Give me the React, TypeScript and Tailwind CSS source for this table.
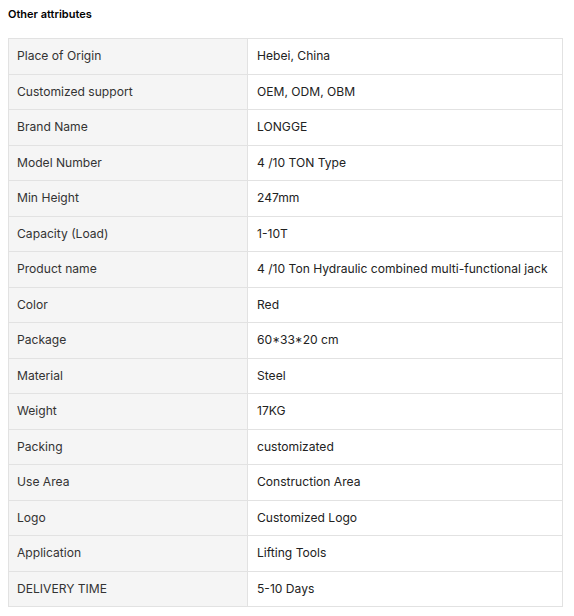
const attributes: [string, string][] = [
  ['Place of Origin', 'Hebei, China'],
  ['Customized support', 'OEM, ODM, OBM'],
  ['Brand Name', 'LONGGE'],
  ['Model Number', '4 /10 TON Type'],
  ['Min Height', '247mm'],
  ['Capacity (Load)', '1-10T'],
  ['Product name', '4 /10 Ton Hydraulic combined multi-functional jack'],
  ['Color', 'Red'],
  ['Package', '60*33*20 cm'],
  ['Material', 'Steel'],
  ['Weight', '17KG'],
  ['Packing', 'customizated'],
  ['Use Area', 'Construction Area'],
  ['Logo', 'Customized Logo'],
  ['Application', 'Lifting Tools'],
  ['DELIVERY TIME', '5-10 Days'],
];

export default function App() {
  return (
    <div className="bg-white w-[574px] h-[616px] font-['Inter',sans-serif] text-[#222]">
      {/* Section title */}
      <h2 className="pl-2 pt-[7px] text-[11px] font-semibold leading-[14px] text-black">
        Other attributes
      </h2>

      {/* Attribute table */}
      <table className="ml-2 mt-[17px] w-[555px] border-collapse text-[12.1px] table-fixed">
        <tbody>
          {attributes.map(([name, value]) => (
            <tr key={name} className="h-[35.5px]">
              <td className="w-[239px] border border-[#e2e2e2] bg-[#f5f5f5] pl-[8px] text-[#333] align-middle">
                {name}
              </td>
              <td className="border border-[#e2e2e2] bg-white pl-[9px] text-[#222] align-middle whitespace-nowrap">
                {value}
              </td>
            </tr>
          ))}
        </tbody>
      </table>
    </div>
  );
}
